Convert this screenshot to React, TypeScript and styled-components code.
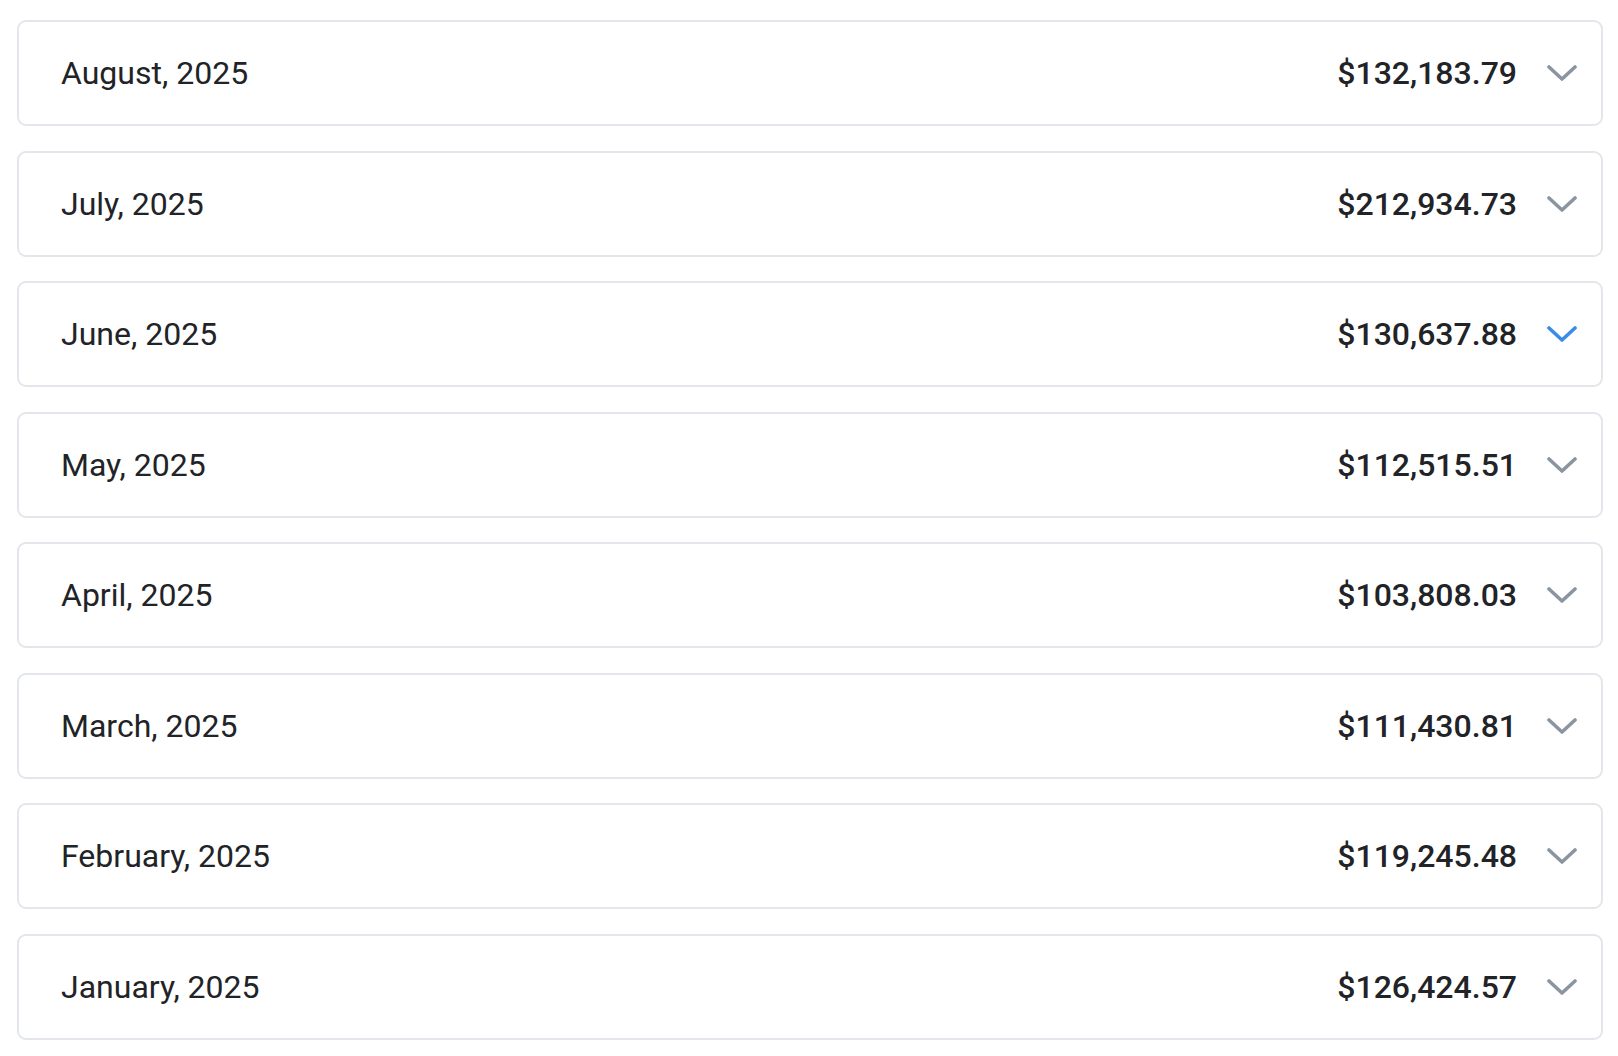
import styled, { createGlobalStyle } from "styled-components";

const GlobalStyle = createGlobalStyle`
	body {
		margin: 0;
		background: #ffffff;
		font-family: Roboto, "Liberation Sans", sans-serif;
	}
`;

const List = styled.div`
	display: flex;
	flex-direction: column;
	gap: 24.5px;
	padding: 20px 15px 0 17px;
`;

const Row = styled.div`
	display: flex;
	align-items: center;
	height: 106px;
	box-sizing: border-box;
	border: 2px solid #e3e6ea;
	border-radius: 9px;
	padding: 0 24px 0 42px;
	background: #ffffff;
`;

const Month = styled.span`
	flex: 1;
	font-size: 32px;
	color: #212327;
`;

const Amount = styled.span`
	font-size: 32px;
	font-weight: 500;
	color: #212327;
	margin-right: 30px;
`;

const Chevron = styled.svg<{ $active?: boolean }>`
	width: 30px;
	height: 18px;
	color: ${(p) => (p.$active ? "#3a8ce8" : "#8b95a2")};
`;

const months = [
	{ label: "August, 2025", total: "$132,183.79" },
	{ label: "July, 2025", total: "$212,934.73" },
	{ label: "June, 2025", total: "$130,637.88", active: true },
	{ label: "May, 2025", total: "$112,515.51" },
	{ label: "April, 2025", total: "$103,808.03" },
	{ label: "March, 2025", total: "$111,430.81" },
	{ label: "February, 2025", total: "$119,245.48" },
	{ label: "January, 2025", total: "$126,424.57" },
];

function App() {
	return (
		<>
			<GlobalStyle />
			<List>
				{months.map((m) => (
					<Row key={m.label}>
						<Month>{m.label}</Month>
						<Amount>{m.total}</Amount>
						<Chevron $active={m.active} viewBox="0 0 30 18" fill="none">
							<path
								d="M2 3 L15 15 L28 3"
								stroke="currentColor"
								strokeWidth="3.6"
								strokeLinecap="round"
								strokeLinejoin="round"
							/>
						</Chevron>
					</Row>
				))}
			</List>
		</>
	);
}

export default App;
